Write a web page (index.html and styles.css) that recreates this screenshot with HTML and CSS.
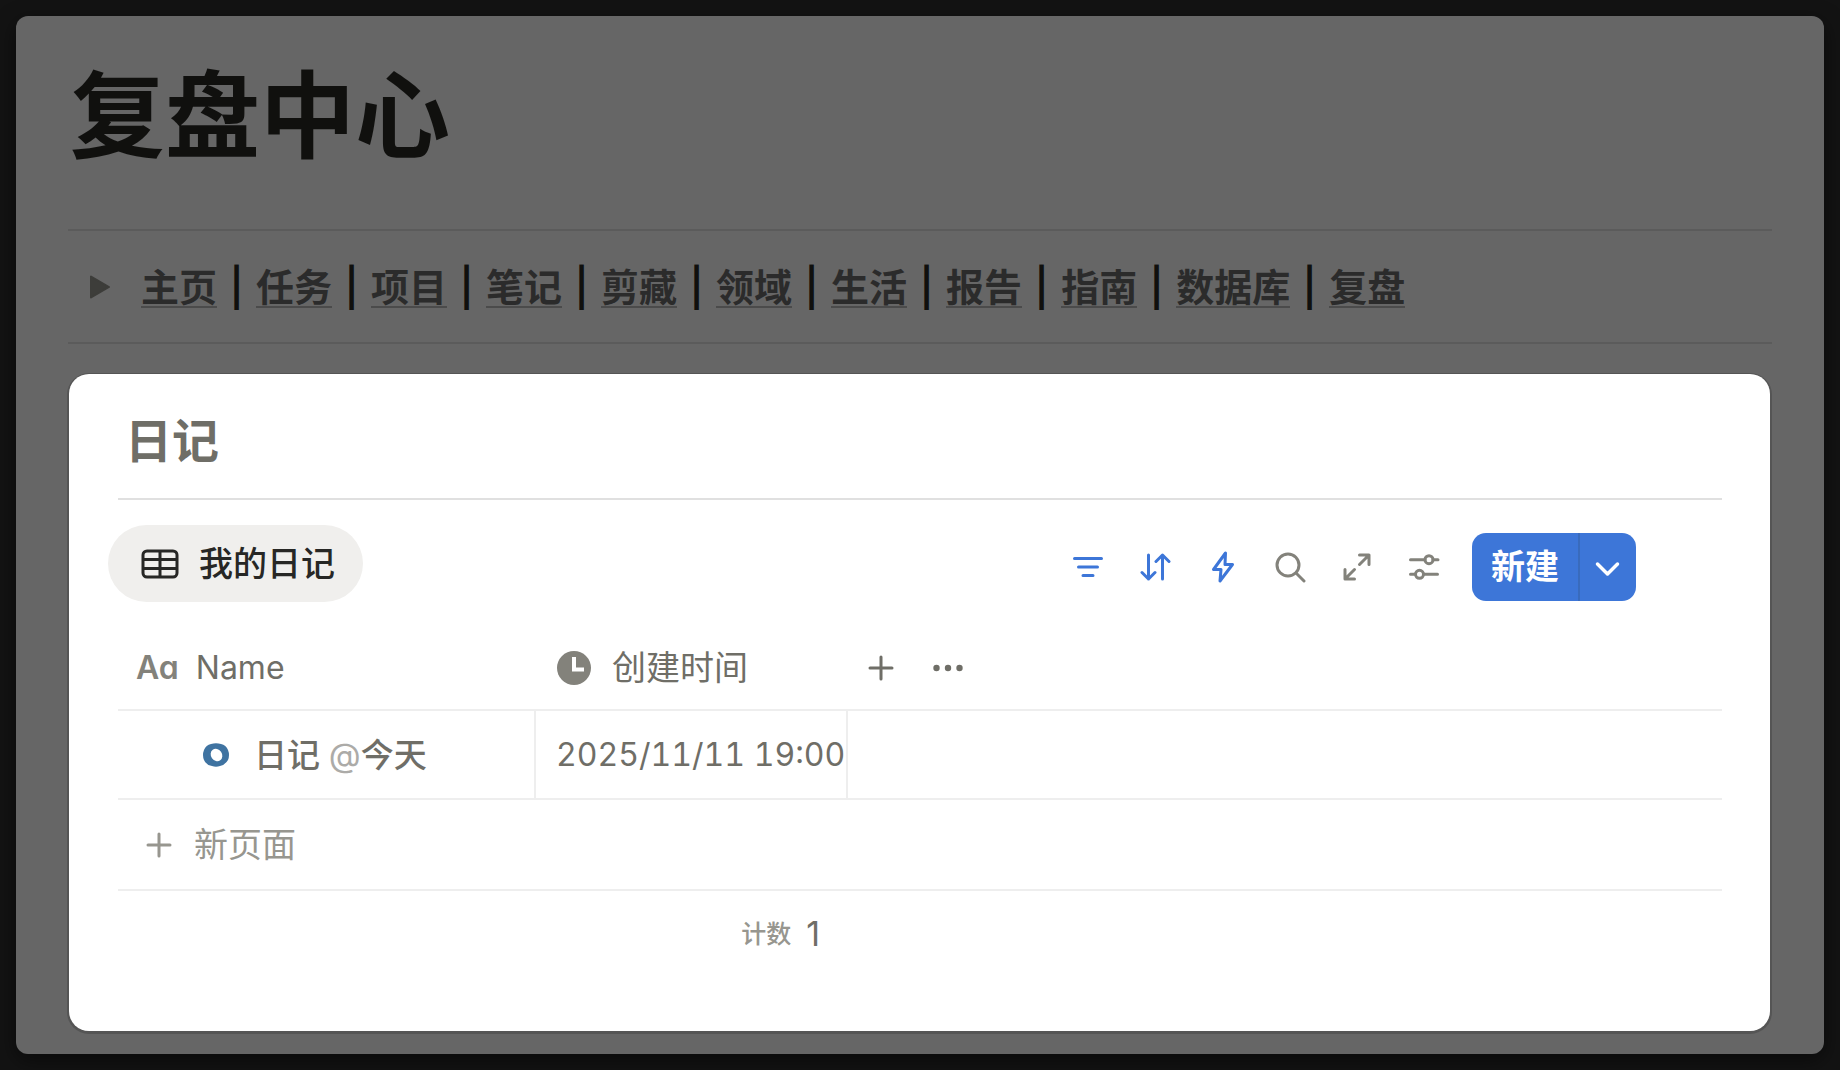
FILE: index.html
```html
<!DOCTYPE html>
<html lang="zh-CN">
<head>
<meta charset="utf-8">
<meta name="viewport" content="width=device-width, initial-scale=1">
<title>复盘中心</title>
<link rel="stylesheet" href="styles.css">
</head>
<body>
<div class="window">
  <h1 class="page-title">复盘中心</h1>
  <nav class="nav" aria-label="导航">
    <button class="toggle" type="button" aria-label="展开">
      <svg width="20" height="24" viewBox="0 0 20 24"><path d="M1 1.5v21L19 12z" fill="currentColor" stroke="currentColor" stroke-width="2" stroke-linejoin="round"/></svg>
    </button>
    <a href="#">主页</a><span class="bar">|</span>
    <a href="#">任务</a><span class="bar">|</span>
    <a href="#">项目</a><span class="bar">|</span>
    <a href="#">笔记</a><span class="bar">|</span>
    <a href="#">剪藏</a><span class="bar">|</span>
    <a href="#">领域</a><span class="bar">|</span>
    <a href="#">生活</a><span class="bar">|</span>
    <a href="#">报告</a><span class="bar">|</span>
    <a href="#">指南</a><span class="bar">|</span>
    <a href="#">数据库</a><span class="bar">|</span>
    <a href="#">复盘</a>
  </nav>
  <main class="card">
    <h2 class="card-title">日记</h2>
    <div class="view-bar">
      <button class="view-tab" type="button">
        <svg width="38" height="30" viewBox="0 0 38 30" fill="none" stroke="currentColor" stroke-width="3"><rect x="2" y="2" width="34" height="26" rx="4"/><path d="M2 10.5h34M2 19.5h34M19 2v26"/></svg>
        我的日记
      </button>
      <div class="tools">
        <button class="tool active" type="button" aria-label="筛选"><svg width="32" height="32" viewBox="0 0 32 32"><path d="M1.500 7.500h27M5.500 16h19M10 24.500h10"/></svg></button>
        <button class="tool active" type="button" aria-label="排序"><svg width="32" height="32" viewBox="0 0 32 32"><path d="M8.500 4v24M2 21.500L8.500 28l6.500-6.500M22.500 28V4M16 10.500L22.500 4l6.500 6.500"/></svg></button>
        <button class="tool active" type="button" aria-label="自动化"><svg width="32" height="32" viewBox="0 0 32 32"><path d="M18.500 2L6.500 18.500h7.500L13 30l12.500-16.500H18z"/></svg></button>
        <button class="tool" type="button" aria-label="搜索"><svg width="32" height="32" viewBox="0 0 32 32"><circle cx="14" cy="14" r="11"/><path d="M22 22l8 8"/></svg></button>
        <button class="tool" type="button" aria-label="展开"><svg width="32" height="32" viewBox="0 0 32 32"><path d="M18.500 13.500L28 4M18.500 4H28v9.500M13.500 18.500L4 28M4 18.500V28h9.500"/></svg></button>
        <button class="tool" type="button" aria-label="设置"><svg width="32" height="32" viewBox="0 0 32 32"><path d="M2.500 8.700h14.500M25 8.700h5M2.500 23.300h5M15.500 23.300h14"/><circle cx="21" cy="8.700" r="4"/><circle cx="11.500" cy="23.300" r="4"/></svg></button>
        <div class="create">
          <button class="create-main" type="button">新建</button>
          <button class="create-more" type="button" aria-label="更多"><svg width="26" height="18" viewBox="0 0 26 18"><path d="M2.500 4l10 10L22.500 4" fill="none" stroke="currentColor" stroke-width="3.500" stroke-linecap="round" stroke-linejoin="round"/></svg></button>
        </div>
      </div>
    </div>
    <table class="entries">
      <colgroup><col class="col-name"><col class="col-time"><col></colgroup>
      <thead>
        <tr>
          <th scope="col"><div class="head latin"><span class="aa">Aa</span>Name</div></th>
          <th scope="col"><div class="head head-time"><svg width="34" height="34" viewBox="0 0 34 34"><circle cx="17" cy="17" r="17" fill="#83827b"/><path d="M17 6v12.500h10" fill="none" stroke="#fff" stroke-width="4"/></svg>创建时间</div></th>
          <td><div class="head-actions">
            <button class="plain" type="button" aria-label="添加属性"><svg width="26" height="26" viewBox="0 0 26 26"><path d="M13 2v22M2 13h22" fill="none" stroke="currentColor" stroke-width="3" stroke-linecap="round"/></svg></button>
            <button class="plain" type="button" aria-label="更多"><svg width="30" height="8" viewBox="0 0 30 8" fill="currentColor"><circle cx="3.500" cy="4" r="3.200"/><circle cx="15" cy="4" r="3.200"/><circle cx="26.500" cy="4" r="3.200"/></svg></button>
          </div></td>
        </tr>
      </thead>
      <tbody>
        <tr class="entry">
          <td><div class="entry-name"><svg width="26" height="24" viewBox="0 0 26 24"><path d="M8 1Q13-0.500 18 1Q23 2 25 7Q27 12 25 17Q22 22 17 23Q13 24.500 9 23Q3 22 1 17Q-1 12 1 7Q3 2 8 1z" fill="#3f73a1"/><ellipse cx="13.500" cy="12" rx="5.500" ry="6.500" transform="rotate(-35 13.500 12)" fill="#fff"/></svg><span>日记 <span class="at">@</span>今天</span></div></td>
          <td class="time latin">2025/11/11 19:00</td>
          <td></td>
        </tr>
        <tr class="add">
          <td colspan="3"><button class="add-page" type="button"><svg width="26" height="26" viewBox="0 0 26 26"><path d="M13 2v22M2 13h22" fill="none" stroke="currentColor" stroke-width="3" stroke-linecap="round"/></svg>新页面</button></td>
        </tr>
      </tbody>
      <tfoot>
        <tr>
          <td></td>
          <td><div class="count"><span class="count-label">计数</span>1</div></td>
          <td></td>
        </tr>
      </tfoot>
    </table>
  </main>
</div>
</body>
</html>
```
FILE: styles.css
```css
* { box-sizing: border-box; }

body {
  margin: 0;
  padding: 16px;
  background: #131313;
  color: #6f6e67;
  font: 400 34px/48px Inter, "Noto Sans CJK SC", sans-serif;
}

button {
  display: flex;
  align-items: center;
  margin: 0;
  padding: 0;
  border: 0;
  background: none;
  color: inherit;
  font: inherit;
}

svg { display: block; flex: none; }

.window {
  min-height: calc(100vh - 32px);
  padding: 29px 52px 22px;
  border-radius: 12px;
  background: #666;
  box-shadow: 0 6px 20px rgba(0, 0, 0, .5);
}

.page-title {
  margin: 0 0 40px;
  padding-left: 2px;
  color: #10100e;
  font-size: 95px;
  font-weight: 700;
  line-height: 144px;
}

.nav {
  display: flex;
  align-items: center;
  height: 115px;
  border: solid #5b5b5b;
  border-width: 2px 0;
  font-size: 38px;
  font-weight: 700;
}

.toggle {
  margin: 0 31px 0 22px;
  color: #3d3d3a;
}

.nav a {
  height: 43px;
  border-bottom: 2px solid #4b4b4b;
  color: #2b2b2b;
  line-height: 44px;
  text-decoration: none;
}

.bar {
  width: 39px;
  color: #10100e;
  font-weight: 600;
  text-align: center;
}

.card {
  min-height: 657px;
  margin: 30px 2px 0 1px;
  padding: 34px 48px 0 49px;
  border-radius: 20px;
  background: #fff;
  box-shadow: 0 1px 0 2px #555;
}

.card-title {
  margin: 0;
  padding: 0 7px 24px;
  border-bottom: 2px solid #e0e0e0;
  font-size: 47px;
  font-weight: 600;
  line-height: 66px;
}

.view-bar {
  display: flex;
  align-items: center;
  justify-content: space-between;
  margin: 25px 86px 0 -10px;
}

.view-tab {
  gap: 20px;
  height: 77px;
  padding: 0 28px 0 33px;
  border-radius: 39px;
  background: #f0efed;
  color: #272725;
  font-weight: 500;
}

.tools {
  display: flex;
  align-items: center;
  gap: 35px;
  padding-top: 7px;
}

.tool { color: #83827b; }
.tool.active { color: #3d76d8; }

.tool path,
.tool circle {
  fill: none;
  stroke: currentColor;
  stroke-width: 3;
  stroke-linecap: round;
  stroke-linejoin: round;
}

.create {
  display: flex;
  height: 68px;
  margin-left: -3px;
  overflow: hidden;
  border-radius: 14px;
  background: #3d76d8;
  color: #fff;
}

.create-main {
  padding: 0 19px;
  border-right: 2px solid #396bbd;
  font-weight: 600;
}

.create-more {
  width: 56px;
  padding-top: 4px;
  justify-content: center;
}

.entries {
  width: 100%;
  margin-top: 25px;
  border-collapse: separate;
  border-spacing: 0;
  table-layout: fixed;
}

.col-name { width: 418px; }
.col-time { width: 312px; }

.entries th,
.entries td {
  padding: 0;
  border-bottom: 2px solid #eee;
  font-weight: 400;
  text-align: left;
}

.entries thead { height: 84px; }

.entries .latin {
  font-size: 32px;
  font-variant-numeric: tabular-nums;
}

.head {
  display: flex;
  align-items: center;
  gap: 17px;
  padding-left: 18px;
}

.head-time {
  gap: 21px;
  padding-left: 21px;
}

.aa {
  color: #83827b;
  font-feature-settings: "cv11";
  font-weight: 600;
}

.head-actions {
  display: flex;
  align-items: center;
  gap: 39px;
  padding-left: 20px;
}

.entry { height: 89px; }

.entries .entry td:not(:last-child) { border-right: 2px solid #eee; }

.entry-name {
  display: flex;
  align-items: center;
  gap: 25px;
  padding-left: 85px;
  font-size: 33px;
  font-weight: 500;
}

.at { color: #acaba8; font-weight: 400; }

.entries .time { padding-left: 20px; white-space: nowrap; }

.add { height: 91px; }

.add-page {
  gap: 22px;
  padding-left: 28px;
  color: #97968f;
}

.entries tfoot { height: 86px; }
.entries tfoot td { border: 0; }

.count {
  display: flex;
  align-items: center;
  justify-content: flex-end;
  gap: 15px;
  padding-right: 28px;
}

.count-label {
  color: #97968f;
  font-size: 25px;
  font-weight: 500;
}
```
